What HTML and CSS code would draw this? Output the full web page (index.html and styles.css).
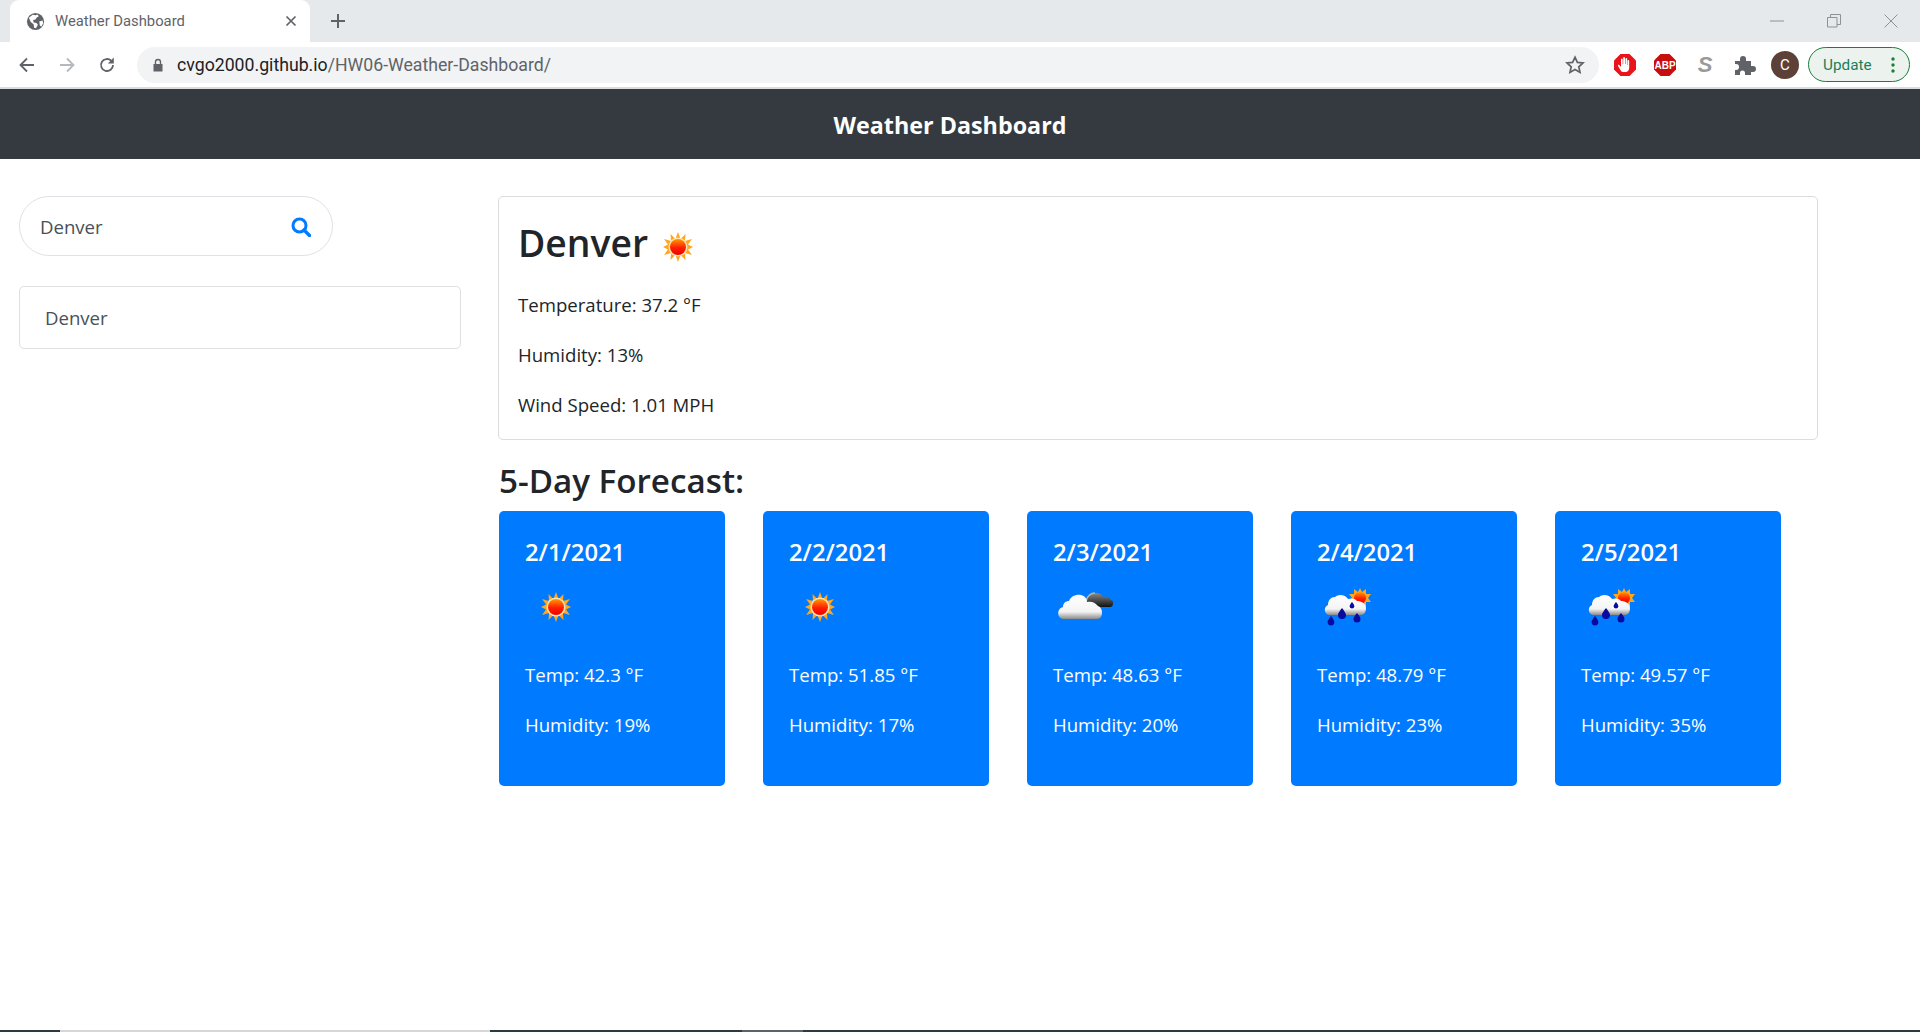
FILE: index.html
```html
<!DOCTYPE html>
<html lang="en">
<head>
<meta charset="utf-8">
<title>Weather Dashboard</title>
<link rel="stylesheet" href="styles.css">
</head>
<body>
<svg class="defs" width="0" height="0" aria-hidden="true">
  <defs>
    <linearGradient id="sunCore" x1="0" y1="0" x2="0" y2="1"><stop offset="0" stop-color="#ff9a00"/><stop offset=".55" stop-color="#ff1e00"/><stop offset="1" stop-color="#f00000"/></linearGradient>
    <linearGradient id="cloudWhite" x1="0" y1="0" x2="0" y2="1"><stop offset="0" stop-color="#fff"/><stop offset=".7" stop-color="#f4f4f4"/><stop offset="1" stop-color="#8c8c8c"/></linearGradient>
    <linearGradient id="cloudDark" x1="0" y1="0" x2="0" y2="1"><stop offset="0" stop-color="#8a8a8a"/><stop offset="1" stop-color="#111"/></linearGradient>
    <symbol id="sun" viewBox="0 0 62 64">
      <polygon fill="#ffa51e" points="31,17 33.6,24 38.5,19 38,26 45,24 41,29.5 46,32 41,34.5 45,40 38,38 38.5,45 33.6,40 31,47 28.4,40 23.5,45 24,38 17,40 21,34.5 16,32 21,29.5 17,24 24,26 23.5,19 28.4,24"/>
      <circle cx="31" cy="32" r="9.5" fill="#ffe6b0"/>
      <circle cx="31" cy="32" r="8" fill="url(#sunCore)"/>
    </symbol>
    <symbol id="cloud" viewBox="1 1 62 64">
      <path fill="url(#cloudDark)" d="M35 29c0-6 4-10 9-10 4 0 6 2 7 4 5-1 7 1 8 3 3 0 3 7-1 7H37z"/>
      <path fill="none" stroke="#b5b5b5" stroke-width="1.4" d="M34 27c1-5 5-8 9-8"/>
      <path fill="url(#cloudWhite)" d="M12 45c-7 0-8-10-1-12 0-4 3-6 6-6 2-5 7-7 12-6 4 1 6 4 6 7 4-1 8 0 11 4 3 1 4 4 4 7 0 3-2 6-5 6z"/>
    </symbol>
    <symbol id="rain" viewBox="2 2 62 64">
      <polygon fill="#ffa51e" points="45,15 47,19 51,16 51,21 56,21 53,25 56,29 51,29 51,34 47,31 45,35 43,31 39,34 39,29 34,29 37,25 34,21 39,21 39,16 43,19"/>
      <circle cx="45" cy="25" r="6" fill="url(#sunCore)"/>
      <path fill="url(#cloudWhite)" d="M15 42c-6 0-7-8-2-10 0-5 3-8 7-8 3-3 10-3 13 2 3-1 7-1 9 2 4 0 9 2 9 7 0 4-2 7-5 7z"/>
      <path fill="#0a0aa0" d="M16 43c3 4 3.400 5 3.400 6a3.400 3.400 0 0 1-6.800 0c0-1 .4-2 3.400-6zM27 35c3.500 4.500 4 6 4 7a4 4 0 0 1-8 0c0-1 .5-2.500 4-7zM42 40c3 3.500 3.500 5 3.500 6a3.500 3.500 0 0 1-7 0c0-1 .5-2.500 3.500-6z"/>
      <circle cx="37" cy="33" r="3.600" fill="#fff"/>
      <path fill="#0a0aa0" d="M37 29c2 2.500 2.300 3.500 2.300 4.200a2.300 2.300 0 0 1-4.600 0c0-.7.3-1.700 2.300-4.200z"/>
    </symbol>
  </defs>
</svg>

<div class="chrome">
  <div class="tabstrip">
    <div class="tab">
      <svg class="favicon" viewBox="0 0 20 20"><circle cx="10" cy="10" r="9" fill="#5f6368"/><path fill="#fff" d="M3 6l4-3 3 .5 2-1 1.500 2-2.500 1.500-1 2-2.500.5.500 2.500 3 .5 1.500 2-2 3.500-2-.5-.5-3.500-3-2.500zM14 10l3.500-1 .5 3-2 3.500-1.500-1.500z"/></svg>
      <span class="tab-title">Weather Dashboard</span>
      <svg class="tab-close" viewBox="0 0 12 12"><path d="M1.500 1.500l9 9m0-9l-9 9" stroke="#5f6368" stroke-width="1.700"/></svg>
    </div>
    <svg class="newtab" viewBox="0 0 16 16"><path d="M8 1v14M1 8h14" stroke="#5f6368" stroke-width="2"/></svg>
    <div class="winctl">
      <svg viewBox="0 0 14 14"><path d="M0 7h14" stroke="#8d9296" stroke-width="1"/></svg>
      <svg viewBox="0 0 14 14"><path d="M.5 3.500h9.500v9.500H.5zM3.500 3.500V.5h10v10H10" fill="none" stroke="#8d9296" stroke-width="1"/></svg>
      <svg viewBox="0 0 14 14"><path d="M.5.5l13 13m0-13l-13 13" stroke="#8d9296" stroke-width="1"/></svg>
    </div>
  </div>
  <div class="toolbar">
    <svg class="nav-btn" viewBox="0 0 18 18"><path d="M16 9H3M9 2.500L2.500 9 9 15.500" fill="none" stroke="#5f6368" stroke-width="1.800"/></svg>
    <svg class="nav-btn" viewBox="0 0 18 18"><path d="M2 9h13M9 2.500L15.500 9 9 15.500" fill="none" stroke="#b6b9bc" stroke-width="1.800"/></svg>
    <svg class="nav-btn" viewBox="0 0 18 18"><path d="M15 9a6 6 0 1 1-1.800-4.300" fill="none" stroke="#5f6368" stroke-width="1.800"/><path fill="#5f6368" d="M15.800 1.500v6h-6z"/></svg>
    <div class="omnibox">
      <svg class="lock" viewBox="0 0 12 14"><path fill="#5f6368" d="M1.500 6h9v7.500h-9z"/><path d="M3.500 6V4a2.500 2.500 0 0 1 5 0v2" fill="none" stroke="#5f6368" stroke-width="1.400"/></svg>
      <span class="url"><span class="url-host">cvgo2000.github.io</span>/HW06-Weather-Dashboard/</span>
      <svg class="star" viewBox="0 0 20 20"><path d="M10 2.200l2.400 5.200 5.600.6-4.200 3.800 1.200 5.600-5-2.900-5 2.900 1.200-5.600L2 8l5.600-.6z" fill="none" stroke="#5f6368" stroke-width="1.700"/></svg>
    </div>
    <div class="exts">
      <svg viewBox="0 0 24 24"><polygon fill="#e8131b" points="7.500,1 16.500,1 23,7.500 23,16.500 16.500,23 7.500,23 1,16.500 1,7.500"/><path fill="#fff" d="M8 18l-3-5c-.6-1 .6-1.800 1.300-1l1.700 2V6.500c0-1.200 1.700-1.200 1.700 0V11h.5V5c0-1.200 1.800-1.200 1.800 0v6h.5V6c0-1.200 1.700-1.200 1.700 0v6h.4V8c0-1.200 1.600-1.200 1.600 0v7c0 2-1.500 4-3.500 4H10c-.8 0-1.500-.4-2-1z"/></svg>
      <svg viewBox="0 0 24 24"><polygon fill="#c70d0d" points="7.500,1 16.500,1 23,7.500 23,16.500 16.500,23 7.500,23 1,16.500 1,7.500"/><text x="12" y="16" class="abp">ABP</text></svg>
      <span class="ext-s">S</span>
      <svg class="ext-puzzle" viewBox="0 0 24 24"><path fill="#5f6368" d="M3 8h5V6a3 3 0 0 1 6 0v2h5v5h2a3 3 0 0 1 0 6h-2v3h-6v-2a2.500 2.500 0 0 0-5 0v2H3v-5h1a3 3 0 0 0 0-6H3z"/></svg>
      <span class="avatar">C</span>
    </div>
    <div class="update"><span class="update-label">Update</span><svg class="update-dots" viewBox="0 0 4 16"><circle cx="2" cy="2" r="1.700"/><circle cx="2" cy="8" r="1.700"/><circle cx="2" cy="14" r="1.700"/></svg></div>
  </div>
</div>

<header class="navbar"><span class="brand">Weather Dashboard</span></header>

<main class="page">
  <aside class="sidebar">
    <div class="search">
      <span class="search-text">Denver</span>
      <svg class="search-icon" viewBox="0 0 20 20"><circle cx="8.500" cy="8.500" r="6.500" fill="none" stroke="#007bff" stroke-width="3"/><path d="M13 13l5.500 5.500" stroke="#007bff" stroke-width="3.400" stroke-linecap="round"/></svg>
    </div>
    <div class="history">Denver</div>
  </aside>
  <section class="content">
    <div class="today">
      <div class="today-title"><h2 class="city">Denver</h2><svg class="wx today-icon"><use href="#sun"/></svg></div>
      <p>Temperature: 37.2 °F</p>
      <p>Humidity: 13%</p>
      <p>Wind Speed: 1.01 MPH</p>
    </div>
    <h3 class="forecast-title">5-Day Forecast:</h3>
    <div class="forecast">
      <article class="day"><h5>2/1/2021</h5><svg class="wx"><use href="#sun"/></svg><p>Temp: 42.3 °F</p><p>Humidity: 19%</p></article>
      <article class="day"><h5>2/2/2021</h5><svg class="wx"><use href="#sun"/></svg><p>Temp: 51.85 °F</p><p>Humidity: 17%</p></article>
      <article class="day"><h5>2/3/2021</h5><svg class="wx"><use href="#cloud"/></svg><p>Temp: 48.63 °F</p><p>Humidity: 20%</p></article>
      <article class="day"><h5>2/4/2021</h5><svg class="wx"><use href="#rain"/></svg><p>Temp: 48.79 °F</p><p>Humidity: 23%</p></article>
      <article class="day"><h5>2/5/2021</h5><svg class="wx"><use href="#rain"/></svg><p>Temp: 49.57 °F</p><p>Humidity: 35%</p></article>
    </div>
  </section>
</main>

<div class="taskbar"><span class="tb-a"></span><span class="tb-b"></span><span class="tb-c"></span><span class="tb-d"></span><span class="tb-e"></span></div>
</body>
</html>
```
FILE: styles.css
```css
* { box-sizing: border-box; }
html, body { height: 100%; }
body {
  margin: 0;
  height: 1032px;
  overflow: hidden;
  display: flex;
  flex-direction: column;
  background: #fff;
  color: #212529;
  font-family: "Open Sans", "Noto Sans", sans-serif;
  font-size: 18.6px;
  line-height: 30px;
}
.defs { position: absolute; }
.chrome { flex: none; height: 89px; border-bottom: 2px solid #dadce0; }
.tabstrip { height: 42px; background: #e6e9ec; display: flex; align-items: center; padding-left: 10px; }
.tab {
  width: 300px; height: 42px; background: #fff; border-radius: 9px 9px 0 0;
  display: flex; align-items: center; padding: 0 13px 0 16px;
}
.favicon { width: 19px; height: 19px; flex: none; }
.tab-title { margin-left: 10px; flex: 1; font: 14.800px/20px "Roboto", sans-serif; color: #5f6368; }
.tab-close { width: 12px; height: 12px; }
.newtab { width: 16px; height: 16px; margin-left: 20px; }
.winctl { margin-left: auto; display: flex; gap: 43px; padding-right: 22px; align-items: center; }
.winctl svg { width: 14px; height: 14px; display: block; }
.toolbar { height: 45px; background: #fff; display: flex; align-items: center; padding-left: 18px; }
.nav-btn { width: 18px; height: 18px; margin-right: 22px; flex: none; }
.omnibox {
  margin-left: -1px; width: 1462px; height: 36px; background: #f1f3f4; border-radius: 18px;
  display: flex; align-items: center; padding: 0 14px 0 15px; flex: none;
}
.lock { width: 12px; height: 14px; flex: none; }
.url { margin-left: 13px; flex: 1; font: 17.700px/24px "Roboto", sans-serif; color: #5f6368; }
.url-host { color: #202124; }
.star { width: 20px; height: 20px; }
.exts { display: flex; align-items: center; width: 210px; padding-left: 14px; gap: 16px; }
.exts svg { width: 24px; height: 24px; flex: none; }
.exts .ext-puzzle { margin-left: -1px; margin-right: 1px; }
.abp { font: 700 10px "Liberation Sans", sans-serif; fill: #fff; text-anchor: middle; }
.ext-s { width: 24px; text-align: center; font: italic 700 22px/24px "Liberation Sans", sans-serif; color: #9a9a9a; }
.avatar {
  width: 28px; height: 28px; border-radius: 50%; background: #5d4037; color: #fff;
  font: 15px/28px "Roboto", sans-serif; text-align: center; margin-left: -2px;
}
.update {
  margin-left: -1px; width: 102px; height: 35px; border: 1.500px solid #188038; border-radius: 18px; background: #ecf3ef;
  display: flex; align-items: center; padding: 0 14px 0 14px; justify-content: space-between;
}
.update-label { font: 15.300px/20px "Roboto", sans-serif; color: #1a7f5a; }
.update-dots { width: 4px; height: 16px; fill: #188038; }
.navbar {
  flex: none; height: 70px; background: #343a40; display: flex; align-items: center; justify-content: center;
  padding: 2px 20px 0 0;
}
.brand { color: #fff; font-weight: 700; font-size: 23.300px; line-height: 30px; }
.page { flex: 1; display: flex; padding: 37px 0 0 19px; min-height: 0; }
.sidebar { width: 442px; flex: none; margin-right: 37px; }
.search {
  width: 314px; height: 60px; border: 1px solid #dee2e6; border-radius: 30px; margin-bottom: 30px;
  display: flex; align-items: center; justify-content: space-between; padding: 2px 21px 0 20px; color: #495057;
}
.search-icon { width: 20px; height: 20px; }
.history { height: 63px; border: 1px solid #dfdfdf; border-radius: 5px; padding: 16px 25px; color: #495057; }
.content { width: 1320px; flex: none; }
.today { height: 244px; border: 1px solid #dcdcdc; border-radius: 5px; padding: 18px 19px 0; margin-bottom: 20px; }
.today-title { display: flex; height: 55px; margin-bottom: 20px; }
.city { margin: 0 -1px 0 0; font-size: 37.300px; line-height: 55px; font-weight: 600; }
.wx { display: block; width: 62px; height: 64px; }
.today-icon { flex: none; }
p { margin: 0 0 20px; }
.forecast-title { margin: 0 0 9px 1px; height: 42px; font-size: 33.200px; line-height: 42px; font-weight: 600; }
.forecast { display: flex; gap: 38px; margin-left: 1px; }
.day { width: 226px; height: 275px; background: #007bff; color: #fff; border-radius: 5px; padding: 26px 26px 25px; }
.day h5 { margin: 0 0 8px; font-size: 23.800px; line-height: 30px; font-weight: 600; }
.day .wx { margin-bottom: 21px; }
.taskbar { flex: none; height: 2px; display: flex; background: #2b3a42; }
.tb-a { width: 60px; }
.tb-b { width: 430px; background: #d6d6d6; }
.tb-c { width: 252px; }
.tb-d { width: 61px; background: #59636a; }
.tb-e { flex: 1; }
```
